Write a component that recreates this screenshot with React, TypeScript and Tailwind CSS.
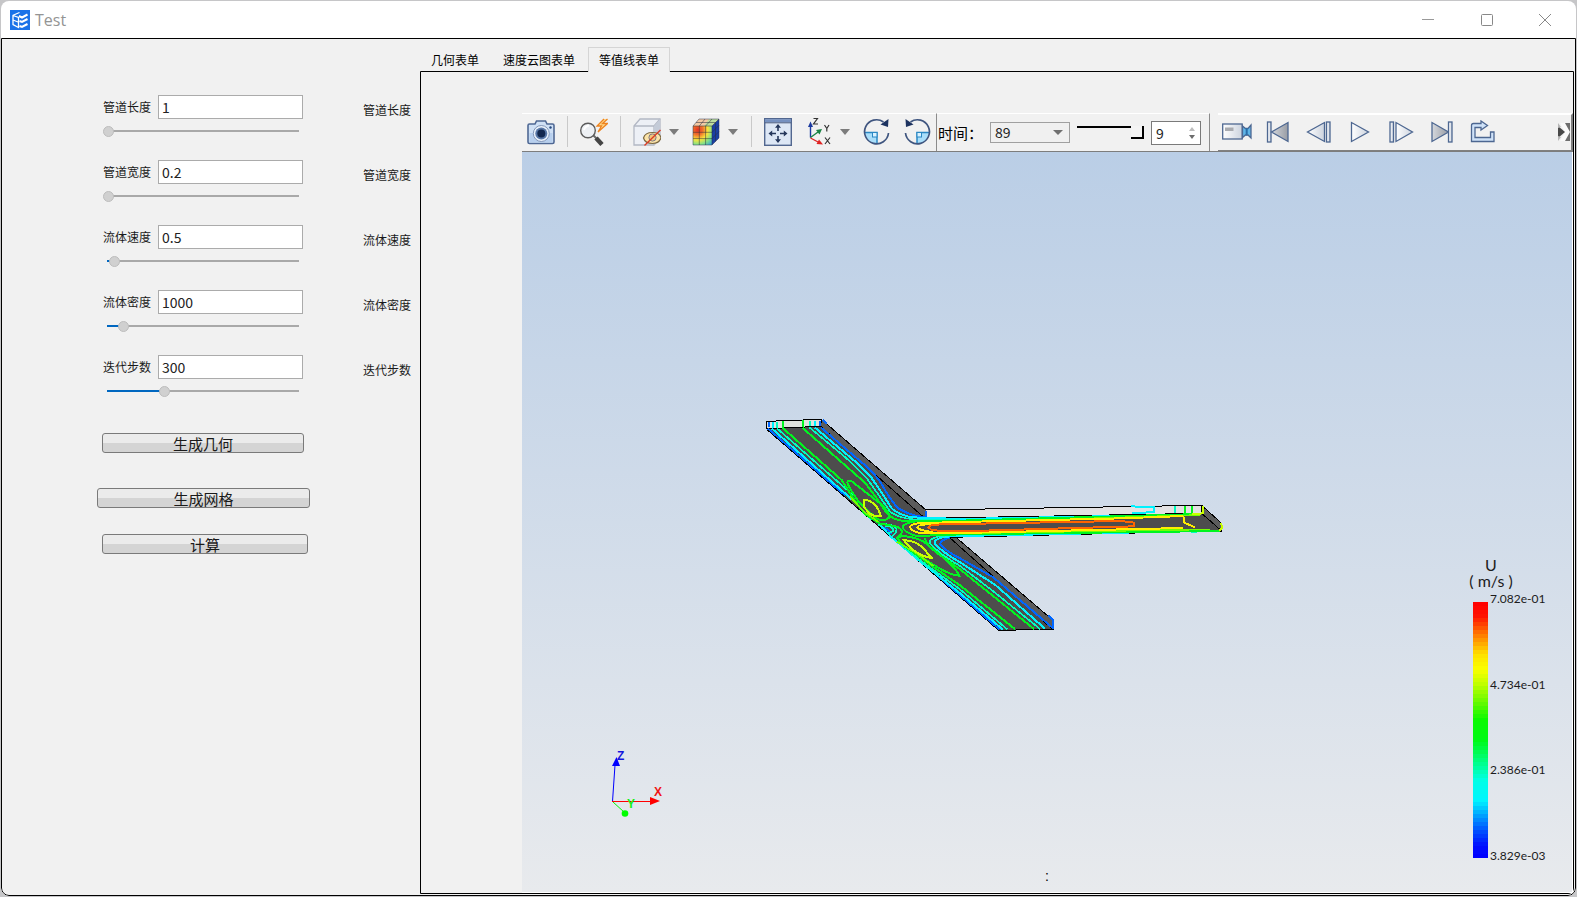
import { useState, type ReactNode } from "react";

type Param = { id: string; label: string; value: number; min: number; max: number; step: number };

const PARAMS: Param[] = [
  { id: "length", label: "管道长度", value: 1, min: 1, max: 10, step: 0.1 },
  { id: "width", label: "管道宽度", value: 0.2, min: 0.2, max: 2, step: 0.1 },
  { id: "speed", label: "流体速度", value: 0.5, min: 0, max: 15, step: 0.1 },
  { id: "density", label: "流体密度", value: 1000, min: 0, max: 12000, step: 100 },
  { id: "steps", label: "迭代步数", value: 300, min: 0, max: 1000, step: 10 },
];

const TABS = ["几何表单", "速度云图表单", "等值线表单"];

const BANDS = 64;

// rainbow from red (top) to blue (bottom)
const STOPS: [number, number, number, number][] = [
  [0, 255, 0, 0],
  [0.05, 255, 20, 0],
  [0.12, 255, 120, 0],
  [0.2, 255, 225, 0],
  [0.26, 250, 255, 0],
  [0.32, 190, 255, 0],
  [0.4, 90, 250, 0],
  [0.46, 10, 250, 0],
  [0.54, 0, 250, 20],
  [0.64, 0, 255, 150],
  [0.7, 0, 255, 230],
  [0.78, 0, 245, 255],
  [0.84, 0, 160, 255],
  [0.9, 0, 80, 255],
  [0.96, 0, 15, 255],
  [1, 0, 0, 255],
];

function bandColor(t: number) {
  const i = Math.max(1, STOPS.findIndex((s) => s[0] >= t));
  const a = STOPS[i - 1];
  const b = STOPS[i];
  const k = (t - a[0]) / (b[0] - a[0]);
  const mix = (n: 1 | 2 | 3) => Math.round(a[n] + (b[n] - a[n]) * k);
  return `rgb(${mix(1)},${mix(2)},${mix(3)})`;
}

function ParamRow({ param }: { param: Param }) {
  const [value, setValue] = useState(String(param.value));
  const num = Number(value) || param.min;
  const pct = Math.min(100, Math.max(0, ((num - param.min) / (param.max - param.min)) * 100));

  return (
    <div className="flex h-[65px] justify-between">
      <div className="w-[200px]">
        <div className="flex h-6 items-center justify-between">
          <label htmlFor={param.id} className="text-xs">
            {param.label}
          </label>
          <input
            id={param.id}
            type="text"
            value={value}
            onChange={(e) => setValue(e.target.value)}
            className="h-6 w-[145px] border border-[#ababab] bg-white px-[3px] text-sm text-[#222] outline-none focus:border-[#0067c0]"
          />
        </div>
        <input
          type="range"
          aria-label={param.label}
          min={param.min}
          max={param.max}
          step={param.step}
          value={num}
          onChange={(e) => setValue(e.target.value)}
          style={{ backgroundImage: `linear-gradient(to right, #0067c0 ${pct}%, #a9a9a9 ${pct}%)` }}
          className="mt-[6px] block h-3 w-[196px] appearance-none bg-transparent bg-[length:192px_2px] bg-right bg-no-repeat outline-none [&::-webkit-slider-thumb]:size-[11px] [&::-webkit-slider-thumb]:appearance-none [&::-webkit-slider-thumb]:rounded-full [&::-webkit-slider-thumb]:border [&::-webkit-slider-thumb]:border-[#bdbdbd] [&::-webkit-slider-thumb]:bg-[#d0d0d0]"
        />
      </div>
      <span className="text-xs leading-[30px]">{param.label}</span>
    </div>
  );
}

function ActionButton({ className, children }: { className: string; children: ReactNode }) {
  return (
    <button
      type="button"
      className={`block h-5 rounded-[3px] border border-[#7a7a7a] bg-[linear-gradient(#ebebeb_50%,#d4d4d4_50%)] text-[15px] leading-[17px] ${className}`}
    >
      {children}
    </button>
  );
}

function Tool({ label, children }: { label: string; children: ReactNode }) {
  return (
    <button type="button" aria-label={label} className="size-7 shrink-0">
      <svg viewBox="0 0 28 28" className="size-7" fill="none">
        {children}
      </svg>
    </button>
  );
}

function MenuArrow({ label }: { label: string }) {
  return (
    <button type="button" aria-label={label} className="w-[11px] shrink-0">
      <svg viewBox="0 0 11 6" className="h-[6px] w-[11px]">
        <path d="M0 0H10L5 6Z" fill="#7c7c7c" />
      </svg>
    </button>
  );
}

function Separator() {
  return <span className="h-[31px] w-px shrink-0 bg-[#c9c9c9]" />;
}

function PlayTool({ label, children }: { label: string; children: ReactNode }) {
  return (
    <button type="button" aria-label={label} className="flex w-[41px] shrink-0 justify-center">
      <svg viewBox="0 0 30 24" className="h-6 w-[30px]" fill="url(#metal)" stroke="#4d6791" strokeWidth="1.3">
        {children}
      </svg>
    </button>
  );
}

function MainToolbar() {
  return (
    <div className="flex h-[38px] w-[414px] shrink-0 items-center gap-3 border-t border-t-white pb-[2px] pl-[5px]">
      <Tool label="截图">
        <path d="M1 7.500Q1 6 2.500 6H8L9.500 3H18.500L20 6H25.500Q27 6 27 7.500V24Q27 25.500 25.500 25.500H2.500Q1 25.500 1 24Z" fill="#cfe0f5" stroke="#4f6894" strokeWidth="1.600" />
        <rect x="2.500" y="15" width="23" height="9.500" fill="#b7cfee" />
        <circle cx="14.300" cy="15.500" r="8" fill="#e9f1fb" stroke="#8296b8" />
        <circle cx="14.300" cy="15.500" r="6" fill="#5877a7" />
        <circle cx="14.300" cy="15.500" r="4" fill="#13284f" />
        <circle cx="23.500" cy="9.500" r="1.200" fill="#284a80" />
      </Tool>
      <Separator />
      <Tool label="缩放">
        <path d="M13.500 17.500L17 21" stroke="#6a6a6a" strokeWidth="2" />
        <path d="M16 20L22 26.500" stroke="#454545" strokeWidth="4.500" />
        <circle cx="8" cy="12.500" r="7.300" fill="#edf0f4" stroke="#5c5c5c" strokeWidth="1.400" />
        <path d="M4 12Q5 8 9 7.500" stroke="#fff" strokeWidth="2" />
        <path d="M24 1L17 8H21.500L18 14L27.500 5.500H22.500L27.500 1" fill="#ffd98a" stroke="#ee8420" strokeWidth="1.300" />
      </Tool>
      <Separator />
      <div className="flex items-center gap-2">
        <Tool label="透明显示">
          <path d="M1 8L7 1H27V20L21 27H1Z" fill="#edf0f6" stroke="#b3b8c4" strokeWidth="1.300" />
          <path d="M1 8H21V27M21 8L27 1" stroke="#b3b8c4" strokeWidth="1.300" />
          <path d="M21 8L27 1V20L21 27Z" fill="#c4cbd8" />
          <path d="M10.500 20Q12 14.500 19.500 14.500Q27 14.500 28 20Q26 25.500 19.500 25.500Q12 25.500 10.500 20Z" fill="#fbe3a8" stroke="#7d6a44" strokeWidth="1.200" />
          <circle cx="19.500" cy="19.500" r="3.600" fill="#f3c67c" stroke="#7a7a8a" />
          <path d="M11.500 27.500L27.500 12" stroke="#dc3c24" strokeWidth="1.400" />
        </Tool>
        <MenuArrow label="透明显示选项" />
      </div>
      <div className="flex items-center gap-2">
        <Tool label="着色">
          <path d="M1 8H20V27H1Z" fill="url(#face)" />
          <path d="M1 8L7 1H27L20 8Z" fill="#f3c9a4" />
          <path d="M12 8L17 1H27L20 8Z" fill="#bddc9e" />
          <path d="M20 8L27 1V20L20 27Z" fill="#1a3fa5" />
          <path d="M1 14.300H20L27 7.300M1 20.600H20L27 13.600M7.300 27V8L13 1M13.600 27V8L20 1M1 8H20V27M20 8L27 1M23.500 4.500V23.500M4 4.500H23.500" stroke="#2b2f3c" strokeOpacity="0.65" strokeWidth="0.800" />
          <path d="M1 8L7 1H27V20L20 27H1Z" stroke="#283048" strokeOpacity="0.600" strokeWidth="0.800" />
        </Tool>
        <MenuArrow label="着色选项" />
      </div>
      <Separator />
      <Tool label="适应窗口">
        <rect x="0.700" y="0.700" width="26.600" height="26.600" fill="#dde7f5" stroke="#52678f" strokeWidth="1.400" />
        <path d="M1 2.800H27" stroke="#7691c0" strokeWidth="3" />
        <path d="M1 4.800H27" stroke="#46597c" />
        <path d="M14 7.500V13M14 18V23.500M6.500 15.500H12M16 15.500H21.500" stroke="#26385c" strokeWidth="1.600" />
        <path d="M14 6L17 9.700H11ZM14 25L11 21.300H17ZM4.500 15.500L8.200 12.500V18.500ZM23.500 15.500L19.800 12.500V18.500Z" fill="#26385c" />
      </Tool>
      <div className="flex items-center gap-2">
        <Tool label="视图方向">
          <path d="M6.500 19.500V7" stroke="#1b3aa0" strokeWidth="1.400" />
          <path d="M6.500 3.500L9 9H4Z" fill="#1b3aa0" />
          <path d="M6.500 19.500L14 14" stroke="#188243" strokeWidth="1.400" />
          <path d="M18 11L15.500 16.500L12 12Z" fill="#188243" />
          <path d="M6.500 20L15 24.500" stroke="#df2424" strokeWidth="1.400" />
          <path d="M19 26.500L12.500 26L15 21.500Z" fill="#df2424" />
          <path d="M9.500 0.500H13.500L9.500 6H14M20.500 7L22.800 10.500L25 7M22.800 10.500V13.500M21 19.500L26 26M26 19.500L21 26" stroke="#333" strokeWidth="1.200" />
        </Tool>
        <MenuArrow label="视图方向选项" />
      </div>
      <Tool label="顺时针旋转">
        <path d="M2 14.500H14V26Q3 25 2 14.500Z" fill="#a9defa" />
        <path d="M2 14.500H14V26" stroke="#2b88c4" strokeWidth="1.500" />
        <rect x="9.500" y="14.500" width="4.500" height="4.500" fill="#d9f2ff" stroke="#2b88c4" />
        <path d="M25.500 15A12 12 0 1 1 20.500 4" stroke="#3f557f" strokeWidth="1.700" />
        <path d="M25.500 1L25 9L17.500 6.500Z" fill="#1d3360" />
      </Tool>
      <Tool label="逆时针旋转">
        <path d="M26 14.500H14V26Q25 25 26 14.500Z" fill="#a9defa" />
        <path d="M26 14.500H14V26" stroke="#2b88c4" strokeWidth="1.500" />
        <rect x="14" y="14.500" width="4.500" height="4.500" fill="#d9f2ff" stroke="#2b88c4" />
        <path d="M2.500 15A12 12 0 1 0 7.500 4" stroke="#3f557f" strokeWidth="1.700" />
        <path d="M2.500 1L3 9L10.500 6.500Z" fill="#1d3360" />
      </Tool>
    </div>
  );
}

function TimeToolbar() {
  const [frame, setFrame] = useState(9);
  return (
    <div className="flex h-[38px] shrink-0 items-center gap-[7px] border-x border-t border-x-[#8c8c8c] border-t-white pl-px pr-2">
      <label htmlFor="time" className="w-[45px] text-[15px] leading-5 text-black">
        时间：
      </label>
      <div className="relative h-[21px] w-20">
        <select id="time" defaultValue="89" className="block h-[21px] w-20 appearance-none border border-[#a0a0a0] bg-[#f0f0f0] pl-1 text-sm leading-[19px] text-[#222]">
          <option>89</option>
        </select>
        <svg viewBox="0 0 10 5" className="pointer-events-none absolute top-2 right-[7px] h-[5px] w-[10px]">
          <path d="M0 0H10L5 5Z" fill="#707070" />
        </svg>
      </div>
      <input
        type="range"
        aria-label="帧"
        min={0}
        max={9}
        value={frame}
        onChange={(e) => setFrame(Number(e.target.value))}
        className="h-4 w-[67px] appearance-none bg-transparent bg-[linear-gradient(#000,#000)] bg-[length:100%_2px] bg-[position:0_1px] bg-no-repeat [&::-webkit-slider-thumb]:h-[13px] [&::-webkit-slider-thumb]:w-[13px] [&::-webkit-slider-thumb]:appearance-none [&::-webkit-slider-thumb]:border-r-2 [&::-webkit-slider-thumb]:border-b-2 [&::-webkit-slider-thumb]:border-black [&::-webkit-slider-thumb]:bg-[#f4f4f4]"
      />
      <div className="flex h-6 w-[50px] border border-[#7a7a7a] bg-white">
        <input
          type="text"
          aria-label="帧号"
          value={frame}
          onChange={(e) => setFrame(Number(e.target.value) || 0)}
          className="w-8 bg-transparent pl-1 text-sm text-[#222] outline-none"
        />
        <div className="flex flex-1 flex-col items-center justify-center gap-1">
          <button type="button" aria-label="增加" onClick={() => setFrame(Math.min(9, frame + 1))}>
            <svg viewBox="0 0 6 4" className="block h-1 w-[6px]">
              <path d="M3 0L6 4H0Z" fill="#bdbdbd" />
            </svg>
          </button>
          <button type="button" aria-label="减少" onClick={() => setFrame(Math.max(0, frame - 1))}>
            <svg viewBox="0 0 6 4" className="block h-1 w-[6px]">
              <path d="M0 0H6L3 4Z" fill="#6c6c6c" />
            </svg>
          </button>
        </div>
      </div>
    </div>
  );
}

function PlaybackToolbar() {
  return (
    <div className="ml-2 flex h-[38px] min-w-0 flex-1 items-center border-t-2 border-r-2 border-b border-t-white border-r-[#808080] border-b-[#808080] pr-px pb-[2px]">
      <div className="-ml-[2px] flex">
        <PlayTool label="录制">
          <rect x="0.700" y="4" width="19.500" height="15" />
          <rect x="3" y="7.500" width="8.500" height="3.500" fill="#a9abb0" stroke="none" />
          <path d="M20.500 6L23.500 8.500H26L29 5V18L26 15H23.500L20.500 17.500Z" fill="#5fb5e8" />
          <path d="M24.700 8V15.500" stroke="#2a6da8" strokeWidth="2" />
        </PlayTool>
        <PlayTool label="第一帧">
          <rect x="4.500" y="2" width="3.500" height="20" />
          <path d="M25 2.500V21.500L8.500 12Z" fill="url(#steel)" />
        </PlayTool>
        <PlayTool label="上一帧">
          <path d="M20.500 2.500V21.500L3.500 12Z" />
          <rect x="22.500" y="2" width="3.500" height="20" />
        </PlayTool>
        <PlayTool label="播放">
          <path d="M6.500 2.500V21.500L23.500 12Z" />
        </PlayTool>
        <PlayTool label="下一帧">
          <rect x="4" y="2" width="3.500" height="20" />
          <path d="M10 2.500V21.500L26.500 12Z" />
        </PlayTool>
        <PlayTool label="最后一帧">
          <path d="M5 2.500V21.500L21.500 12Z" fill="url(#steel)" />
          <rect x="21.500" y="2" width="3.500" height="20" />
        </PlayTool>
        <PlayTool label="导出">
          <path d="M3.500 5.500Q3.500 3.500 5.500 3.500H13V1L19.500 5.500L13 10V7.500H7V17.500H22.500V12H26V21.500H3.500Z" fill="#cfe2f8" />
        </PlayTool>
      </div>
      <button type="button" aria-label="更多" className="ml-auto">
        <svg viewBox="0 0 12 18" className="h-[18px] w-3">
          <path d="M4 0H12V18H4L9 9Z" fill="#6e6e6e" />
          <path d="M2 0H7L12 9L7 18H2L7 9Z" fill="#fafafa" />
          <path d="M0 3L7 9L0 15Z" fill="#484848" />
          <path d="M0 0L3 4L0 5ZM0 18L3 14L0 13Z" fill="#b5b5b5" />
        </svg>
      </button>
    </div>
  );
}

// X-shaped duct with velocity iso-lines on its front face
function DuctContours() {
  return (
    <svg viewBox="30 30 1410 690" className="absolute top-[258px] left-[238px] h-[230px] w-[470px]" fill="none" shapeRendering="crispEdges">
      <path d="M214 58L528 330L525 355L212 79Z" fill="#5c5c5c" />
      <path d="M618 412L910 662L908 688L598 412Z" fill="#5c5c5c" />
      <path d="M50 86L212 79L525 355L1355 340L1415 393L598 412L908 688L746 691Z" fill="#4d4d4d" />
      <path d="M50 64L214 58L212 79L50 86Z" fill="#e0e2dd" />
      <path d="M528 331L1355 316V340L525 355Z" fill="#e2e1e2" />
      <path d="M1355 316L1415 370V393L1355 340Z" fill="#5c5c5c" />

      <g stroke="#000" strokeWidth="3">
        <path d="M50 64L214 58L212 79L50 86Z" />
        <path d="M214 58L528 330L1355 316V340L525 355L212 79" />
        <path d="M1355 316L1415 370V393L1355 340" />
        <path d="M598 412L908 688L746 691L50 88M618 412L910 662V688M598 412L1415 393" />
      </g>

      <g stroke="#0066ff" strokeWidth="6">
        <path d="M57 66V82M210 62V78M218 60L230 70M528 333V354" />
        <path d="M54 86L285 286M520 490L748 688" />
        <path d="M212 82L350 200Q388 235 405 270Q425 305 445 325Q470 340 500 348L528 352" />
        <path d="M600 413Q565 422 572 435Q590 455 630 475L730 532L908 684" />
        <path d="M895 645L909 660V686M392 382L410 386L426 402" />
      </g>

      <g stroke="#00f2ff" strokeWidth="6">
        <path d="M69 66V83M195 62V78" />
        <path d="M66 86L312 304L366 360M385 370L425 412L500 476L630 580L758 688" />
        <path d="M194 82L315 184L365 234Q400 285 425 325Q448 345 485 352L630 357L1160 347" />
        <path d="M630 408L1260 395M630 407L590 410Q548 416 556 432Q575 455 630 487L735 554L885 686" />
        <path d="M1142 319L1212 322V336L1145 340" />
      </g>

      <g stroke="#00ffc0" strokeWidth="5">
        <path d="M81 65V83M180 62V79" />
        <path d="M82 86L310 286M445 428L520 488L630 568L772 688" />
        <path d="M178 82L300 184L352 237Q395 297 420 335Q445 354 490 358L630 360" />
        <path d="M630 404L585 407Q535 412 540 430Q565 460 630 498L725 570L870 687" />
        <path d="M384 376Q430 366 440 388Q438 402 426 408M405 378Q430 378 430 392L414 400" />
        <path d="M1274 318V338M1322 395H1340" />
      </g>

      <g stroke="#00f520" strokeWidth="6">
        <path d="M99 64V83M158 61V80" />
        <path d="M98 84L275 240L312 298L345 343L388 370L440 380Q465 390 450 406L438 416" />
        <path d="M158 84L290 200L345 248Q390 306 410 340Q430 360 460 363L630 362L1352 342" />
        <path d="M1410 393L630 403L500 408Q455 395 459 378Q475 362 520 364" />
        <path d="M292 248Q295 238 305 244L390 310Q424 340 416 354Q400 366 380 356L330 310Q300 270 292 248Z" />
        <path d="M442 412Q470 402 520 424L565 460Q620 505 628 527Q600 525 560 500L470 444Q448 428 442 412Z" />
        <path d="M525 415Q530 440 580 472L630 508L852 687M444 424L540 494L630 556L795 687" />
        <path d="M1305 317V340M1326 317V340" />
      </g>

      <g stroke="#72ff00" strokeWidth="5">
        <path d="M300 290L345 338L386 366M440 425L500 460L550 498" />
        <path d="M1350 345L1000 356M630 400L1380 388" />
      </g>

      <g stroke="#c8ff00" strokeWidth="6">
        <path d="M342 299Q380 302 392 348Q362 354 342 320Z" />
        <path d="M462 421Q495 420 520 445L545 474Q515 470 490 450Q470 435 462 421Z" />
        <path d="M1358 318V340L1325 343M1413 368L1417 385L1408 392" />
      </g>

      <g stroke="#ffee00" strokeWidth="6">
        <path d="M1300 348L1115 355L630 366L520 369Q480 370 480 382Q485 396 520 400L630 399L1300 384" />
        <path d="M545 372Q502 374 502 382Q508 392 548 396" />
        <path d="M1300 348L1303 368L1335 382" />
      </g>

      <path d="M546 374L630 372L1113 363L1152 368V379L630 394L546 391L536 382Z" stroke="#ff6400" strokeWidth="6" />
    </svg>
  );
}

function AxisTriad() {
  return (
    <svg viewBox="0 0 100 100" className="absolute bottom-[62px] left-[68px] size-[100px] font-['Liberation_Sans'] text-[12px] font-bold">
      <path d="M22.500 71.500L25 35" stroke="#00f" />
      <path d="M26.500 27L30 36H22Z" fill="#00f" />
      <path d="M22 71.500H62" stroke="#f00" />
      <path d="M60 67V75L70 71Z" fill="#f00" />
      <path d="M23 72L34 82" stroke="#0f0" />
      <circle cx="35" cy="83.500" r="3.300" fill="#0f0" />
      <text x="27" y="30" fill="#1414dc">Z</text>
      <text x="64" y="66" fill="#f01414">X</text>
      <text x="37" y="78" fill="#14f014">Y</text>
    </svg>
  );
}

function Legend() {
  return (
    <div className="absolute right-[28px] bottom-[31px] w-[76px] font-['Lato'] text-[#1c1c1c]">
      <div className="-ml-[3px] w-[52px] text-center text-base leading-4 whitespace-pre">
        <p>U</p>
        <p>( m/s )</p>
      </div>
      <div className="mt-[10px] flex h-[262px] gap-[2px]">
        <svg viewBox={`0 0 15 ${BANDS * 4}`} className="mt-[3px] ml-[5px] h-64 w-[15px] shrink-0" shapeRendering="crispEdges">
          {Array.from({ length: BANDS }, (_, i) => (
            <rect key={i} y={i * 4} width="15" height="4" fill={bandColor(i / (BANDS - 1))} />
          ))}
        </svg>
        <div className="-mt-2 flex h-[273px] flex-col justify-between text-xs leading-4 whitespace-nowrap">
          <span>7.082e-01</span>
          <span>4.734e-01</span>
          <span>2.386e-01</span>
          <span>3.829e-03</span>
        </div>
      </div>
    </div>
  );
}

export default function App() {
  const [tab, setTab] = useState(2);

  return (
    <div className="flex h-screen min-h-[700px] flex-col bg-[#c6c6c8] p-px font-['Noto_Sans_CJK_SC',sans-serif] text-[#1a1a1a]">
      <svg className="absolute size-0" aria-hidden="true">
        <defs>
          <linearGradient id="metal" x1="0" x2="1">
            <stop offset="0" stopColor="#fff" />
            <stop offset="1" stopColor="#ccd3de" />
          </linearGradient>
          <linearGradient id="steel" x1="0" x2="1">
            <stop offset="0" stopColor="#d5d8dd" />
            <stop offset="1" stopColor="#989ca4" />
          </linearGradient>
          <radialGradient id="face" cx="0.25" cy="0.2" r="1.05">
            <stop offset="0" stopColor="#e63222" />
            <stop offset="0.25" stopColor="#f0702c" />
            <stop offset="0.5" stopColor="#f9e63c" />
            <stop offset="0.75" stopColor="#7fe08a" />
            <stop offset="1" stopColor="#2f9bdc" />
          </radialGradient>
        </defs>
      </svg>
      <div className="flex flex-1 flex-col overflow-hidden rounded-lg bg-white">
        <header className="flex h-[37px] shrink-0 items-center pl-[9px]">
          <svg viewBox="0 0 20 20" className="size-5" fill="none">
            <rect width="20" height="20" fill="#1a72e8" />
            <path d="M2.500 5.500L9.500 2.500M3 5.500V14.500L8.500 17.500V7.500L3 5.500" stroke="#fff" strokeWidth="1.300" />
            <path d="M3 10L8 12" stroke="#fff" strokeWidth="1.300" />
            <path d="M9 6L12 7.500L17.500 4.500M9.500 11L12 12L17.500 9M9.500 16L12 17L17.500 14" stroke="#fff" strokeWidth="2" />
          </svg>
          <h1 className="ml-[5px] font-['Open_Sans'] text-base text-[#949494]">Test</h1>
          <div className="ml-auto flex pr-[2px]">
            <button type="button" aria-label="最小化" className="flex w-[59px] justify-center">
              <svg viewBox="0 0 12 12" className="size-3" stroke="#999" fill="none">
                <path d="M0 5.500H12" />
              </svg>
            </button>
            <button type="button" aria-label="最大化" className="flex w-[59px] justify-center">
              <svg viewBox="0 0 12 12" className="size-3" stroke="#888" fill="none">
                <rect x="0.500" y="0.500" width="11" height="11" rx="1" />
              </svg>
            </button>
            <button type="button" aria-label="关闭" className="flex w-[58px] justify-center">
              <svg viewBox="0 0 12 12" className="size-3" stroke="#888" fill="none">
                <path d="M0 0L12 12M12 0L0 12" />
              </svg>
            </button>
          </div>
        </header>

        <main className="flex min-h-0 flex-1 rounded-b-lg border border-black bg-[#f1f1f1]">
          <form className="w-[418px] shrink-0 pt-14 pr-[9px] pl-[101px]" onSubmit={(e) => e.preventDefault()}>
            {PARAMS.map((p) => (
              <ParamRow key={p.id} param={p} />
            ))}
            <ActionButton className="mt-[13px] -ml-px w-[202px]">生成几何</ActionButton>
            <ActionButton className="mt-[35px] -ml-[6px] w-[213px]">生成网格</ActionButton>
            <ActionButton className="mt-[26px] -ml-px w-[206px]">计算</ActionButton>
          </form>

          <section className="flex min-w-0 flex-1 flex-col pt-2 pr-px pb-px">
            <div role="tablist" className="flex h-6 text-xs text-black">
              {TABS.map((name, i) => (
                <button
                  key={name}
                  type="button"
                  role="tab"
                  aria-selected={i === tab}
                  onClick={() => setTab(i)}
                  className={
                    i === tab
                      ? "relative z-10 h-[25px] border border-b-0 border-[#d5d5d5] bg-[#f1f1f1] px-[10px]"
                      : "h-[25px] pr-[13px] pl-[11px]"
                  }
                >
                  {name}
                </button>
              ))}
            </div>

            <div className="flex min-h-0 flex-1 flex-col rounded-br-md border border-black pt-[41px] pl-[101px]">
              <div className="flex h-[39px] shrink-0 border-b border-[#7d7d7d]">
                <MainToolbar />
                <TimeToolbar />
                <PlaybackToolbar />
              </div>
              <div className="relative min-h-0 flex-1 overflow-hidden border-r border-b border-white bg-[linear-gradient(#bacee6,#e8eaed)]">
                <DuctContours />
                <AxisTriad />
                <Legend />
                <p className="absolute inset-x-0 bottom-[6px] text-center font-['Liberation_Sans'] text-sm text-black">:</p>
              </div>
            </div>
          </section>
        </main>
      </div>
    </div>
  );
}
